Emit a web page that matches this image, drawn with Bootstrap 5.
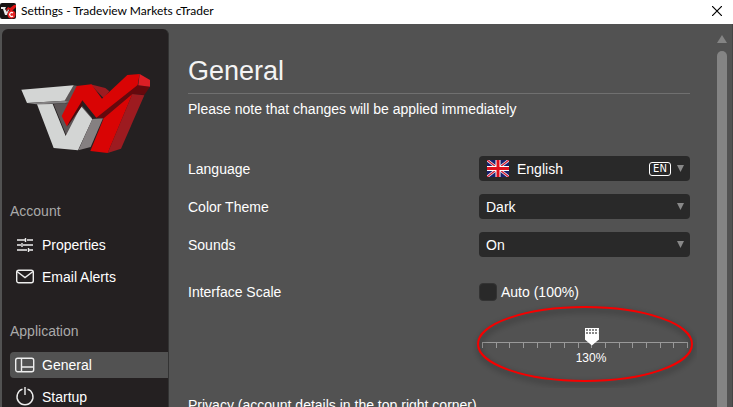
<!DOCTYPE html>
<html lang="en">
<head>
<meta charset="utf-8">
<meta name="viewport" content="width=device-width, initial-scale=1">
<title>Settings - Tradeview Markets cTrader</title>
<link href="https://cdn.jsdelivr.net/npm/bootstrap@5.3.0/dist/css/bootstrap.min.css" rel="stylesheet">
<style>
  body { font: 14px/20px "Liberation Sans", Arial, sans-serif; color: #fff; background: #525252; }
  .titlebar { height: 24px; background: #fff; color: #000; font: 12px/20px Lato, "Open Sans", sans-serif; padding: 0 11px 2px 0; gap: 5px; }
  .titlebar h1 { font: inherit; }
  .titlebar button, .scroll-up { line-height: 0; color: inherit; }
  .sidebar { width: 167px; margin: 5px 0 0 2px; padding: 44px 0 0 8px; background: #242021; border-radius: 6px 6px 0 0; border-right: 1px solid #333; }
  .brand { width: 130px; margin: 0 0 47px 11px; }
  .group-title { font-size: 14px; line-height: 20px; color: #aaa; margin-bottom: 11px; font-weight: 400; }
  .side-group { margin-bottom: 31px; gap: 6px; }
  .side-link { height: 26px; gap: 7px; padding-left: 5px; color: #fff; text-decoration: none; border-radius: 4px 0 0 4px; }
  .side-link.active { background: #525252; }
  .side-link svg { width: 20px; height: 20px; fill: none; stroke: #eee; stroke-width: 1.4; }
  .settings { padding: 27px 27px 0 19px; }
  .settings h2 { font-size: 27px; line-height: 40px; padding-bottom: 2px; border-bottom: 1px solid #707070; margin-bottom: 5px; color: #f4f4f4; }
  .intro { margin-bottom: 37px; }
  .setting { margin-bottom: 13px; min-height: 25px; }
  .control { width: 211px; }
  .control select { height: 25px; background: #292929; color: #fff; border: 0; border-radius: 4px; padding: 0 24px 0 7px; appearance: none; font-size: 14px; }
  .language select { padding-left: 38px; }
  .chevron { right: 6px; top: 9px; pointer-events: none; }
  .flag { left: 8px; top: 4px; pointer-events: none; }
  .locale { right: 19px; top: 6px; pointer-events: none; border: 1px solid #fff; border-radius: 3px; width: 22px; height: 14px; font: 10px/12px "DejaVu Sans", sans-serif; text-align: center; }
  .scale-row { padding-top: 8px; }
  .auto-check { width: 18px; height: 18px; appearance: none; background: #292929; border: 1px solid #333; border-radius: 4px; margin: 0; }
  .auto-check:checked { background: #ddd; }
  .scale-slider { margin-top: 25px; padding: 0 2px 0 3px; }
  .ticks { height: 6px; margin-top: -4px; border-top: 1px solid #999; }
  .ticks span { width: 1px; height: 5px; background: #999; }
  .scale-slider input { width: calc(100% + 14px); margin-left: -7px; height: 19px; appearance: none; background: transparent; display: block; position: relative; z-index: 1; }
  .scale-slider input::-webkit-slider-thumb { appearance: none; width: 14px; height: 18px; clip-path: polygon(0 0, 100% 0, 100% 67%, 50% 100%, 0 67%);
    background: linear-gradient(90deg, transparent 13px, #fff 13px), repeating-linear-gradient(90deg, #fff 0 1px, transparent 1px 3px) 0 0 / 100% 6px no-repeat, linear-gradient(#fff 1px, #888 1px 3px, #fff 3px 4px, #888 4px 6px, #fff 6px); }
  .scale-value { font-size: 12px; line-height: 14px; display: block; text-align: center; padding-left: 12px; margin-top: 3px; }
  .highlight { left: -7px; top: -25px; width: 225px; height: 86px; pointer-events: none; z-index: 2; }
  .privacy { margin-top: 30px; }
  .scroll-rail { width: 16px; padding-top: 11px; border-right: 1px solid #444; gap: 8px; }
  .scroll-thumb { width: 10px; background: #848484; border-radius: 5px 5px 0 0; }
</style>
<script src="https://cdn.jsdelivr.net/npm/bootstrap@5.3.0/dist/js/bootstrap.bundle.min.js"></script>
</head>
<body class="vh-100 overflow-hidden d-flex flex-column">
<header class="titlebar d-flex align-items-center flex-shrink-0">
  <svg width="16" height="16" viewBox="0 0 16 16" aria-hidden="true"><rect width="16" height="16" rx="2" fill="#171313"/><path d="M1 4h5L5 6l2 3 1-3 1 1-2 5H5L3 6H1z" fill="#e8e8e8"/><path d="M6 7l2-3 2 1 4-3h2v2l-4 4-2 3H8l2-4-2-1-1 2z" fill="#e01515"/><circle cx="11.500" cy="11.500" r="4" fill="#e52222"/><path d="M13 10a2 2 0 1 0 0 3" fill="none" stroke="#fff" stroke-width="1.300"/></svg>
  <h1 class="m-0 flex-grow-1">Settings - Tradeview Markets cTrader</h1>
  <button type="button" class="border-0 bg-transparent p-0" aria-label="Close"><svg width="10" height="10" viewBox="0 0 10 10"><path d="M0 0l10 10M10 0L0 10" stroke="#000" stroke-width="1.200"/></svg></button>
</header>
<div class="d-flex flex-grow-1 overflow-hidden">
  <nav class="sidebar flex-shrink-0" aria-label="Settings">
    <svg class="brand d-block" viewBox="62 158 390 242" role="img" aria-label="Tradeview Markets">
      <path d="M160 252L205 248 193 241 220 195 232 197 215 232 246 258 276 294 200 350z" fill="#5c5657"/>
      <path d="M63 208L220 195 193 241 80 248z" fill="#d3d5d4"/>
      <path d="M80 248l113-7 14 4-14 4-85 3z" fill="#858384"/>
      <path d="M110 252l47-1 39 96 46-89 34 39-43 93-73-7z" fill="#d3d5d4"/>
      <path d="M276 296l32-2-37 86-37 10z" fill="#858081"/>
      <path d="M200 320l46-64 1-21-20 10z" fill="#4b0b0e"/>
      <path d="M270 192l45 11 12 10-17 21z" fill="#9d1b20"/>
      <path d="M305 235L288 292 310 294 396 221 432 224 449 199 412 194z" fill="#65090d"/>
      <path d="M184 287l45-90 44-5 32 43 76-71 37-3-6 33-124 98-42-52-47 78z" fill="#d90404"/>
      <path d="M418 161l31 18v20l-35-4z" fill="#dc1e25"/>
      <path d="M396 221l36 4-70 160-40 13z" fill="#9d1b20"/>
      <path d="M310 294l86-73-74 177-52-6z" fill="#d90404"/>
    </svg>
    <h2 class="group-title">Account</h2>
    <div class="side-group d-flex flex-column">
      <a class="side-link d-flex align-items-center" href="#properties"><svg viewBox="0 0 20 20"><path d="M2 5h8M12 5h6M2 10h4M8 10h10M2 15h10M14 15h4M10.500 3v4M7 8v4M13.500 13v4"/></svg>Properties</a>
      <a class="side-link d-flex align-items-center" href="#alerts"><svg viewBox="0 0 20 20"><rect x="1.700" y="3.200" width="16.600" height="12.600" rx="2"/><path d="M2 4.500l8 6 8-6"/></svg>Email Alerts</a>
    </div>
    <h2 class="group-title">Application</h2>
    <div class="side-group d-flex flex-column">
      <a class="side-link active d-flex align-items-center" href="#general" aria-current="page"><svg viewBox="0 0 20 20"><rect x=".7" y="3.200" width="18" height="13.600" rx="2"/><path d="M6.500 3v14M6.500 12h12"/></svg>General</a>
      <a class="side-link d-flex align-items-center" href="#startup"><svg viewBox="0 0 20 20"><path d="M7.500 2.200a8 8 0 1 0 5 0M10 0v8"/></svg>Startup</a>
    </div>
  </nav>
  <main class="settings flex-grow-1">
    <h2 class="fw-normal">General</h2>
    <p class="intro">Please note that changes will be applied immediately</p>
    <div class="setting d-flex align-items-center justify-content-between">
      <label for="language">Language</label>
      <div class="control language position-relative">
        <select id="language" class="w-100 d-block"><option>English</option></select>
        <svg class="flag position-absolute" width="22" height="17" viewBox="0 0 22 17"><path fill="#17206e" d="M0 0h22v17H0z"/><path d="M0 0l22 17M22 0L0 17" stroke="#e8e8f0" stroke-width="2.600"/><path d="M0 0l22 17M22 0L0 17" stroke="#d8142a" stroke-width="1.200"/><path d="M11 0v17M0 8.500h22" stroke="#fff" stroke-width="5"/><path d="M11 0v17M0 8.500h22" stroke="#e0101c" stroke-width="3"/></svg>
        <span class="locale position-absolute">EN</span>
        <svg class="chevron position-absolute" width="7" height="7" viewBox="0 0 7 7"><path d="M0 0h7L3.500 7z" fill="#888"/></svg>
      </div>
    </div>
    <div class="setting d-flex align-items-center justify-content-between">
      <label for="theme">Color Theme</label>
      <div class="control position-relative">
        <select id="theme" class="w-100 d-block"><option>Dark</option></select>
        <svg class="chevron position-absolute" width="7" height="7" viewBox="0 0 7 7"><path d="M0 0h7L3.500 7z" fill="#888"/></svg>
      </div>
    </div>
    <div class="setting d-flex align-items-center justify-content-between">
      <label for="sounds">Sounds</label>
      <div class="control position-relative">
        <select id="sounds" class="w-100 d-block"><option>On</option></select>
        <svg class="chevron position-absolute" width="7" height="7" viewBox="0 0 7 7"><path d="M0 0h7L3.500 7z" fill="#888"/></svg>
      </div>
    </div>
    <div class="scale-row d-flex justify-content-between">
      <label for="scale" class="pt-1">Interface Scale</label>
      <div class="control">
        <div class="d-flex align-items-center gap-1 pt-1">
          <input class="auto-check" type="checkbox" id="auto"><label for="auto">Auto (100%)</label>
        </div>
        <div class="scale-slider position-relative">
          <input type="range" id="scale" min="50" max="200" step="10" value="130">
          <div class="ticks d-flex justify-content-between"><span></span><span></span><span></span><span></span><span></span><span></span><span></span><span></span><span></span><span></span><span></span><span></span><span></span><span></span><span></span><span></span></div>
          <output class="scale-value" for="scale">130%</output>
          <svg class="highlight position-absolute" viewBox="0 0 225 86" aria-hidden="true"><defs><filter id="soft" x="-10%" y="-20%" width="120%" height="140%"><feGaussianBlur stdDeviation="3"/></filter></defs><ellipse cx="114" cy="45" rx="107" ry="37" fill="none" stroke="#000" stroke-opacity=".35" stroke-width="3" filter="url(#soft)"/><ellipse cx="113" cy="42" rx="107" ry="37" fill="none" stroke="#f60000" stroke-width="2"/></svg>
        </div>
      </div>
    </div>
    <p class="privacy mb-0">Privacy (account details in the top right corner)</p>
  </main>
  <div class="scroll-rail d-flex flex-column align-items-start flex-shrink-0">
    <button type="button" class="scroll-up border-0 bg-transparent p-0" aria-label="Scroll up"><svg width="10" height="8" viewBox="0 0 10 8"><path d="M5 0l5 8H0z" fill="#848484"/></svg></button>
    <div class="scroll-thumb flex-grow-1"></div>
  </div>
</div>
</body>
</html>
